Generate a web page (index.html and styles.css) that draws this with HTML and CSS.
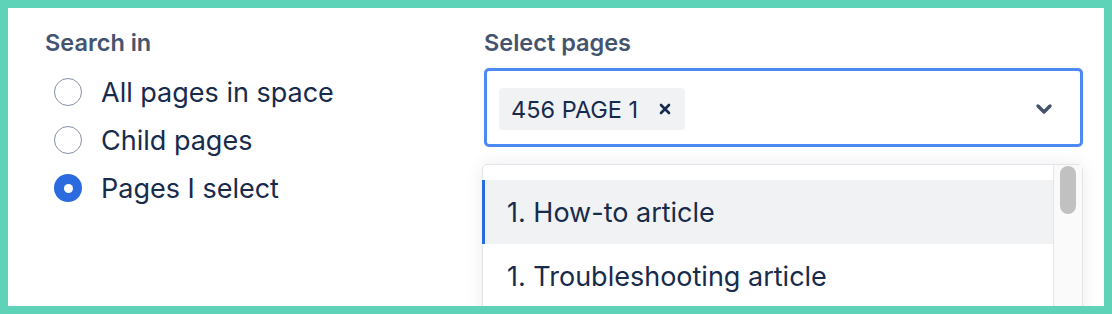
FILE: index.html
```html
<!DOCTYPE html>
<html lang="en">
<head>
    <meta charset="UTF-8">
    <meta name="viewport" content="width=device-width, initial-scale=1.0">
    <title>Search scope</title>
    <link rel="stylesheet" href="styles.css">
</head>
<body>

<div class="frame">
    <div class="col-left">
        <div class="label">Search in</div>
        <div class="radio-row">
            <span class="radio"></span>
            <span class="radio-text">All pages in space</span>
        </div>
        <div class="radio-row">
            <span class="radio"></span>
            <span class="radio-text">Child pages</span>
        </div>
        <div class="radio-row">
            <span class="radio checked"></span>
            <span class="radio-text">Pages I select</span>
        </div>
    </div>

    <div class="col-right">
        <div class="label">Select pages</div>
        <div class="select-box">
            <div class="tag">
                <span>456 PAGE 1</span>
                <svg class="tag-x" width="12" height="12" viewBox="0 0 12 12">
                    <path d="M2 2 L10 10 M10 2 L2 10" stroke="#172b4d" stroke-width="2.6" stroke-linecap="round"/>
                </svg>
            </div>
            <svg class="chevron" width="18" height="12" viewBox="0 0 18 12">
                <path d="M3 3 L9 9 L15 3" fill="none" stroke="#44546f" stroke-width="3.4" stroke-linecap="round" stroke-linejoin="round"/>
            </svg>
        </div>
        <div class="menu">
            <div class="menu-list">
                <div class="menu-item active">1. How-to article</div>
                <div class="menu-item">1. Troubleshooting article</div>
            </div>
            <div class="scrollbar">
                <div class="thumb"></div>
            </div>
        </div>
    </div>
</div>

</body>
</html>
```

FILE: styles.css
```css
body {
    margin: 0;
    font-family: Inter, "Noto Sans", sans-serif;
    color: #172b4d;
}

.frame {
    box-sizing: border-box;
    width: 1112px;
    height: 314px;
    border: 8px solid #5fd3b8;
    background: #fff;
    padding: 23px 0 0 37px;
    display: flex;
    overflow: hidden;
}

.col-left {
    width: 439px;
}

.col-right {
    width: 599px;
}

.label {
    font-size: 23.5px;
    font-weight: 600;
    line-height: 24px;
    color: #44546f;
    margin-bottom: 13px;
}

.radio-row {
    display: flex;
    align-items: center;
    height: 48px;
    padding-left: 9px;
    gap: 19px;
}

.radio {
    box-sizing: border-box;
    width: 28px;
    height: 28px;
    border: 1.5px solid #8590a2;
    border-radius: 50%;
    display: flex;
    align-items: center;
    justify-content: center;
}

.radio.checked {
    border: none;
    background: #2c6ae0;
}

.radio.checked::after {
    content: "";
    width: 9px;
    height: 9px;
    border-radius: 50%;
    background: #fff;
}

.radio-text {
    font-size: 27px;
}

.select-box {
    box-sizing: border-box;
    height: 79px;
    border: 3px solid #4c89f5;
    border-radius: 5px;
    display: flex;
    align-items: center;
    justify-content: space-between;
    padding: 3px 27px 0 12px;
}

.tag {
    box-sizing: border-box;
    height: 42px;
    width: 186px;
    background: #f1f2f4;
    border-radius: 4px;
    display: flex;
    align-items: center;
    padding-left: 12px;
    gap: 21px;
    font-size: 23.5px;
}

.tag-x {
    display: block;
}

.chevron {
    display: block;
}

.menu {
    margin-top: 17px;
    margin-left: -2px;
    height: 200px;
    border: 1px solid #e2e4e8;
    border-radius: 5px 5px 0 0;
    box-shadow: 0 0 18px rgba(9, 30, 66, 0.08);
    display: flex;
}

.menu-list {
    flex: 1;
    padding-top: 15px;
}

.menu-item {
    height: 64px;
    display: flex;
    align-items: center;
    padding-left: 22px;
    font-size: 27px;
    border-left: 3px solid transparent;
    margin-left: -1px;
}

.menu-item.active {
    background: #f1f2f4;
    border-left-color: #2c6ae0;
}

.scrollbar {
    width: 28px;
    border-left: 1px solid #e6e6e6;
    background: #fafafa;
    padding-top: 1px;
}

.thumb {
    width: 16px;
    height: 48px;
    margin-left: 6px;
    border-radius: 8px;
    background: #c1c1c1;
}
```
